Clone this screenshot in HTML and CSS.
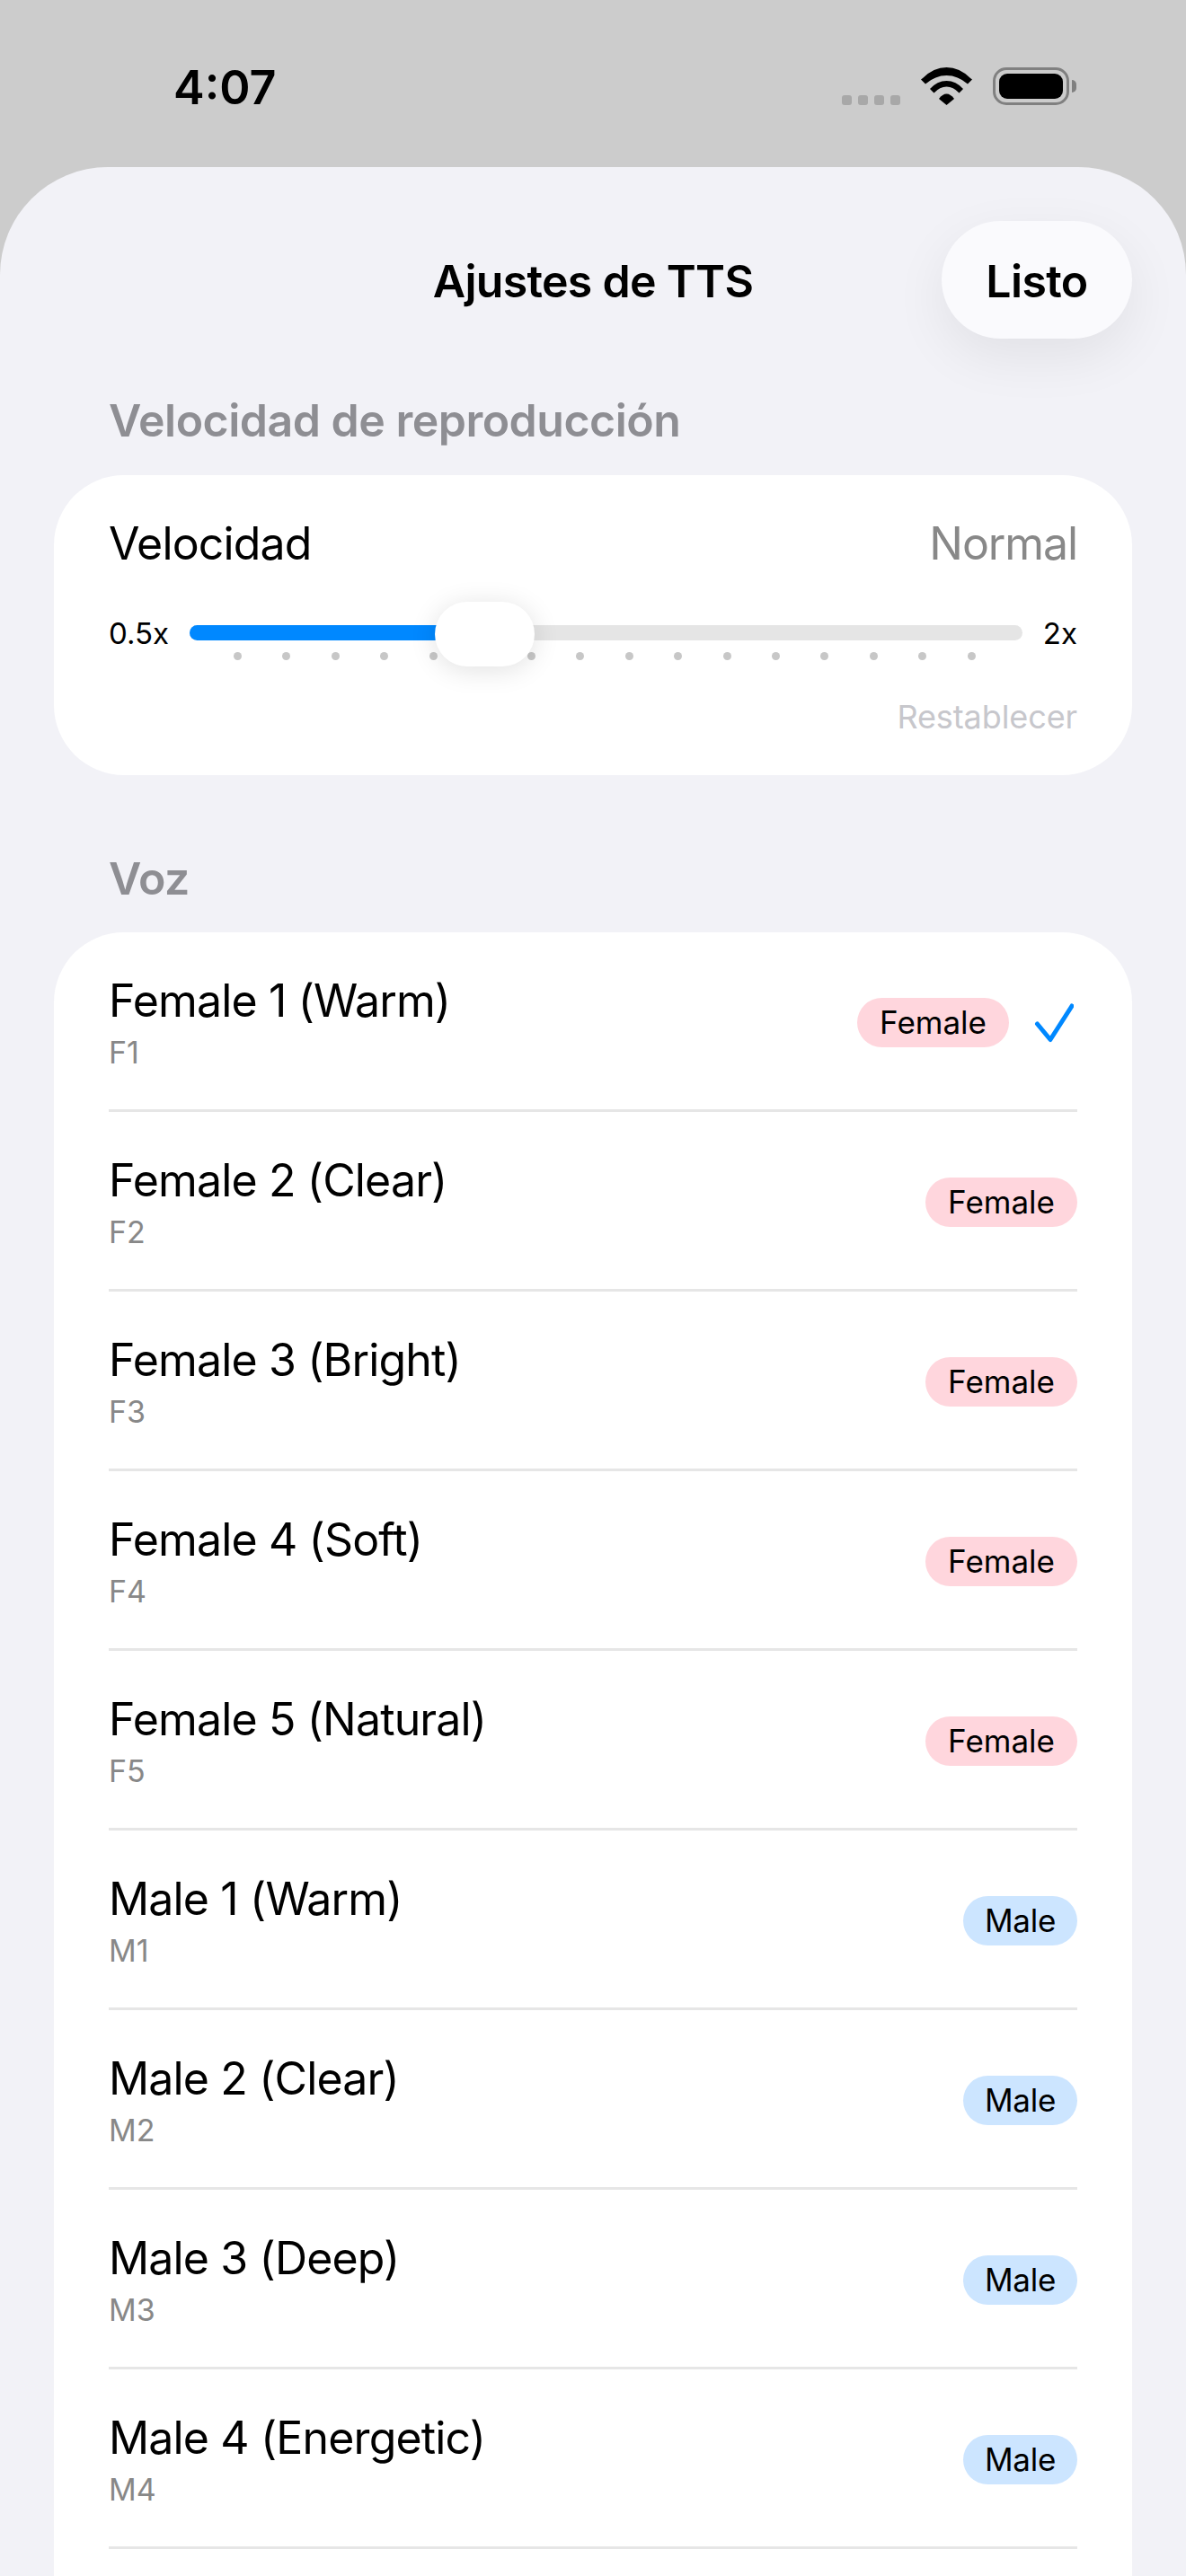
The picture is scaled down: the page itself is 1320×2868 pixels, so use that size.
FILE: index.html
```html
<!DOCTYPE html>
<html lang="es">
<head>
    <meta charset="UTF-8">
    <meta name="viewport" content="width=device-width, initial-scale=1.0">
    <title>Ajustes de TTS</title>
    <link rel="stylesheet" href="styles.css">
</head>
<body>
    <div class="status-bar">
        <span class="time">4:07</span>
        <div class="status-icons">
            <div class="signal"><i></i><i></i><i></i><i></i></div>
            <svg class="wifi" width="57" height="42" viewBox="0 0 57 42">
                <path d="M0 13.5Q1 12.5 2 12Q14 0 28.5 0Q43 0 55 12Q56 12.5 57 13.5L52 18.5Q41 9 28.5 9Q16 9 5 18.500Z"/>
                <path d="M10 24Q18 15 28.500 15Q39 15 47 24L42.500 28.500Q36 21.500 28.500 21.500Q21 21.500 14.500 28.500Z"/>
                <path d="M20 35Q24 29.500 28.500 29.500Q33 29.500 37 35L28.500 42Z"/>
            </svg>
            <div class="battery"><div class="battery-fill"></div></div>
            <div class="battery-tip"></div>
        </div>
    </div>

    <div class="sheet">
        <div class="nav">
            <h1 class="nav-title">Ajustes de TTS</h1>
            <button class="done-btn">Listo</button>
        </div>

        <h2 class="section-title speed-title">Velocidad de reproducción</h2>
        <div class="card speed-card">
            <div class="speed-head">
                <span class="speed-label">Velocidad</span>
                <span class="speed-value">Normal</span>
            </div>
            <div class="slider-row">
                <span class="slider-end">0.5x</span>
                <div class="slider">
                    <div class="track"><div class="track-fill"></div></div>
                    <div class="ticks">
                        <i></i><i></i><i></i><i></i><i></i><i></i><i></i><i></i>
                        <i></i><i></i><i></i><i></i><i></i><i></i><i></i><i></i>
                    </div>
                    <div class="thumb"></div>
                </div>
                <span class="slider-end">2x</span>
            </div>
            <div class="reset">Restablecer</div>
        </div>

        <h2 class="section-title voice-title">Voz</h2>
        <div class="card voice-card">
            <div class="voice-row">
                <div class="voice-text">
                    <div class="voice-name">Female 1 (Warm)</div>
                    <div class="voice-code">F1</div>
                </div>
                <span class="badge female">Female</span>
                <svg class="check" width="44" height="44" viewBox="0 0 44 44">
                    <path d="M3.500 23L18 40.500L42 3"/>
                </svg>
            </div>
            <div class="voice-row">
                <div class="voice-text">
                    <div class="voice-name">Female 2 (Clear)</div>
                    <div class="voice-code">F2</div>
                </div>
                <span class="badge female">Female</span>
            </div>
            <div class="voice-row">
                <div class="voice-text">
                    <div class="voice-name">Female 3 (Bright)</div>
                    <div class="voice-code">F3</div>
                </div>
                <span class="badge female">Female</span>
            </div>
            <div class="voice-row">
                <div class="voice-text">
                    <div class="voice-name">Female 4 (Soft)</div>
                    <div class="voice-code">F4</div>
                </div>
                <span class="badge female">Female</span>
            </div>
            <div class="voice-row">
                <div class="voice-text">
                    <div class="voice-name">Female 5 (Natural)</div>
                    <div class="voice-code">F5</div>
                </div>
                <span class="badge female">Female</span>
            </div>
            <div class="voice-row">
                <div class="voice-text">
                    <div class="voice-name">Male 1 (Warm)</div>
                    <div class="voice-code">M1</div>
                </div>
                <span class="badge male">Male</span>
            </div>
            <div class="voice-row">
                <div class="voice-text">
                    <div class="voice-name">Male 2 (Clear)</div>
                    <div class="voice-code">M2</div>
                </div>
                <span class="badge male">Male</span>
            </div>
            <div class="voice-row">
                <div class="voice-text">
                    <div class="voice-name">Male 3 (Deep)</div>
                    <div class="voice-code">M3</div>
                </div>
                <span class="badge male">Male</span>
            </div>
            <div class="voice-row">
                <div class="voice-text">
                    <div class="voice-name">Male 4 (Energetic)</div>
                    <div class="voice-code">M4</div>
                </div>
                <span class="badge male">Male</span>
            </div>
        </div>
    </div>
</body>
</html>
```

FILE: styles.css
```css
* {
    box-sizing: border-box;
}
html, body {
    margin: 0;
    height: 2868px;
    overflow: hidden;
}
body {
    font-family: Inter, "Liberation Sans", sans-serif;
    background-color: #cccccc;
    color: #000;
    display: flex;
    flex-direction: column;
}

/* status bar */
.status-bar {
    height: 186px;
    flex: none;
    display: flex;
    justify-content: space-between;
    padding: 68px 122px 0 193px;
}
.time {
    font-size: 52px;
    font-weight: 600;
    line-height: 60px;
}
.status-icons {
    display: flex;
    align-items: flex-end;
    height: 42px;
    margin-top: 7px;
}
.signal {
    display: flex;
    gap: 7px;
    margin-right: 23px;
}
.signal i {
    width: 11px;
    height: 11px;
    border-radius: 3px;
    background-color: #a8a8a8;
}
.wifi {
    fill: #000;
    margin-right: 23px;
}
.battery {
    width: 85px;
    height: 42px;
    border: 3px solid #808080;
    border-radius: 15px;
    padding: 4px;
}
.battery-fill {
    height: 100%;
    background-color: #000;
    border-radius: 9px;
}
.battery-tip {
    width: 5px;
    height: 14px;
    background-color: #808080;
    border-radius: 0 5px 5px 0;
    margin: 0 0 14px 3px;
}

/* sheet */
.sheet {
    flex: 1;
    min-height: 0;
    display: flex;
    flex-direction: column;
    background-color: #f2f2f7;
    border-radius: 120px 120px 0 0;
    padding: 60px 60px 0;
}
.nav {
    display: grid;
    grid-template-columns: 212px 1fr 212px;
    align-items: center;
    height: 131px;
    flex: none;
}
.nav-title {
    grid-column: 2;
    margin: 0;
    padding-top: 3px;
    font-size: 50px;
    font-weight: 600;
    letter-spacing: -0.7px;
    text-align: center;
}
.done-btn {
    grid-column: 3;
    height: 131px;
    border: none;
    border-radius: 66px;
    background-color: #fafafd;
    box-shadow: 0 20px 60px rgba(0, 0, 0, 0.07);
    font-family: inherit;
    font-size: 50px;
    font-weight: 600;
    letter-spacing: -0.6px;
    color: #000;
    padding: 3px 0 0;
}

.section-title {
    margin: 0;
    padding-left: 61px;
    font-size: 50px;
    font-weight: 600;
    letter-spacing: -0.5px;
    color: #8e8e93;
    line-height: 60px;
}
.speed-title {
    margin-top: 61px;
    margin-bottom: 31px;
}
.voice-title {
    margin-top: 85px;
    margin-bottom: 30px;
}

.card {
    background-color: #fff;
    border-radius: 78px;
    flex: none;
}

/* speed card */
.speed-card {
    height: 334px;
    padding: 46px 61px 0;
}
.speed-head {
    display: flex;
    justify-content: space-between;
    font-size: 50px;
    letter-spacing: -0.85px;
    line-height: 60px;
}
.speed-value {
    color: #888;
    letter-spacing: -1.1px;
}
.slider-row {
    display: flex;
    align-items: flex-start;
    justify-content: space-between;
    margin-top: 48px;
}
.slider-end {
    font-size: 33px;
    line-height: 44px;
}
.slider {
    position: relative;
    width: 927px;
    margin-top: 13px;
}
.track {
    height: 17px;
    border-radius: 9px;
    background-color: #e5e5e5;
    overflow: hidden;
}
.track-fill {
    width: 300px;
    height: 100%;
    background-color: #0088ff;
}
.ticks {
    display: flex;
    justify-content: space-between;
    margin-top: 13px;
    padding: 0 52px 0 49px;
}
.ticks i {
    width: 9px;
    height: 9px;
    border-radius: 50%;
    background-color: #c7c7c7;
}
.thumb {
    position: absolute;
    left: 273px;
    top: -26px;
    width: 111px;
    height: 72px;
    border-radius: 36px;
    background-color: #fff;
    box-shadow: 0 4px 30px rgba(0, 0, 0, 0.12);
}
.reset {
    margin-top: 41px;
    text-align: right;
    font-size: 36px;
    letter-spacing: -0.1px;
    line-height: 44px;
    color: #c7c7cc;
}

/* voice list */
.voice-card {
    flex: 1;
    padding: 0 61px;
    border-radius: 78px 78px 0 0;
}
.voice-row {
    height: 200px;
    display: flex;
    align-items: center;
    border-bottom: 3px solid #e6e6e6;
    padding-top: 4px;
}
.voice-text {
    flex: 1;
}
.voice-name {
    font-size: 50px;
    letter-spacing: -0.85px;
    line-height: 60px;
}
.voice-code {
    font-size: 34px;
    line-height: 44px;
    color: #888;
    margin-top: 6px;
}
.badge {
    height: 55px;
    border-radius: 28px;
    padding: 0 25px;
    font-size: 35px;
    line-height: 55px;
}
.female {
    background-color: #ffd6dd;
}
.male {
    background-color: #cce5ff;
    padding: 0 24px;
    letter-spacing: -0.3px;
}
.check {
    margin-left: 28px;
    margin-right: 4px;
    fill: none;
    stroke: #0088ff;
    stroke-width: 5;
    stroke-linecap: round;
    stroke-linejoin: round;
}
```
